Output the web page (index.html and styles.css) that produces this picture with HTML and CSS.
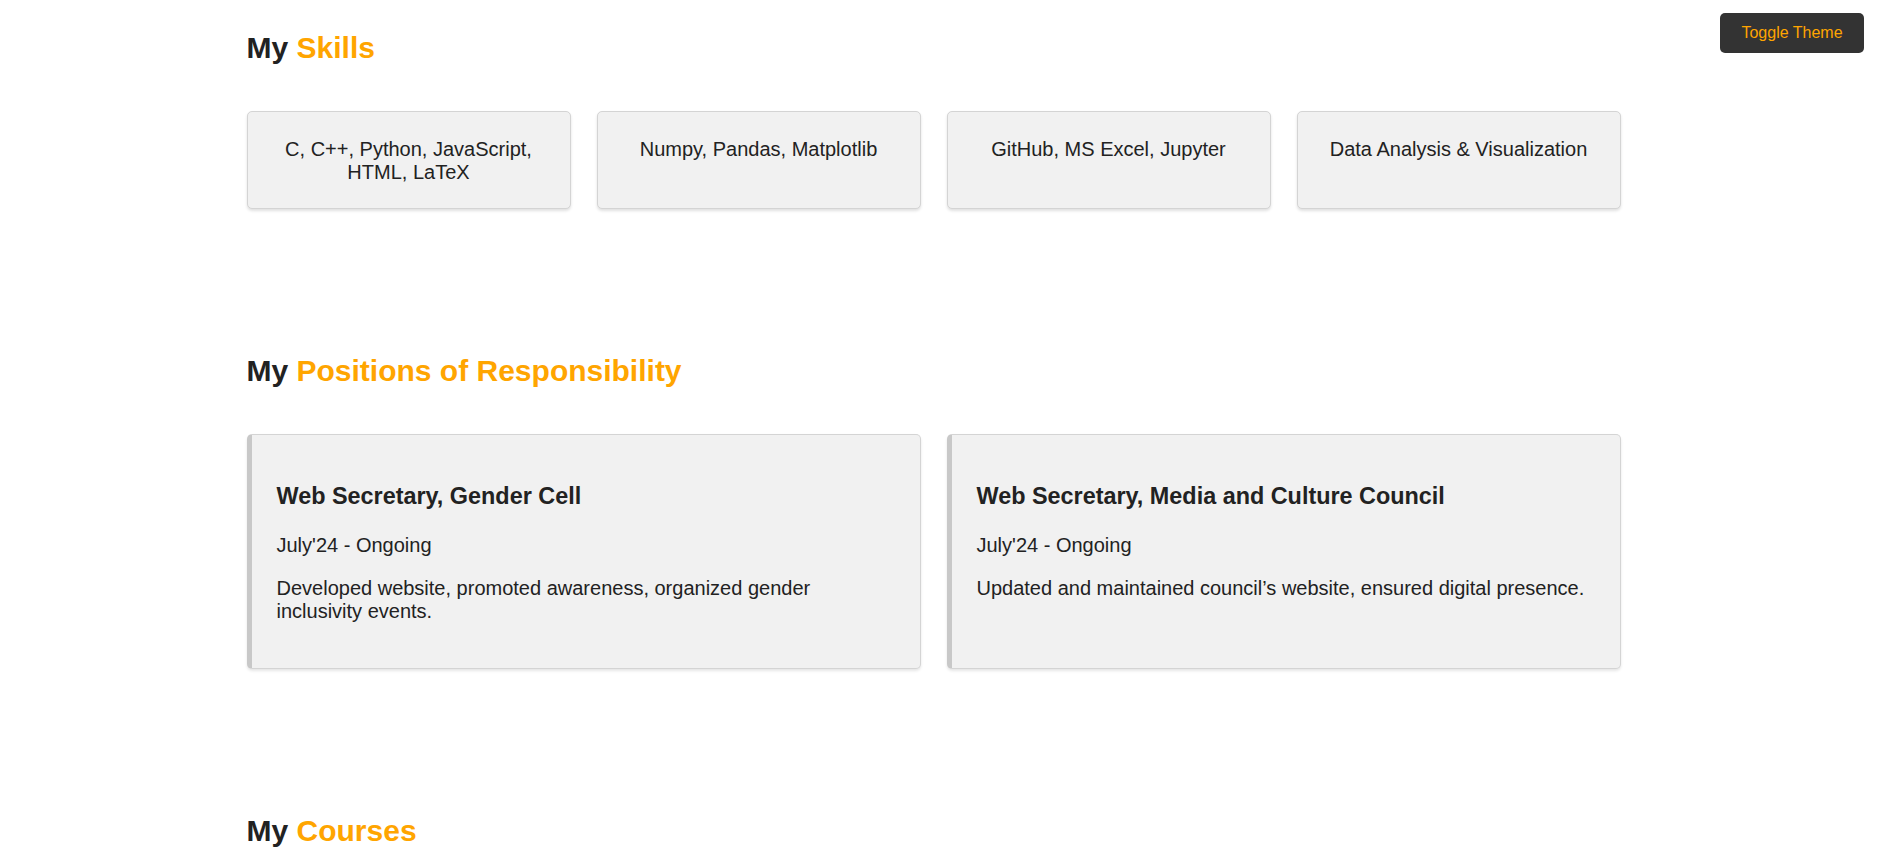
FILE: index.html
```html
<!DOCTYPE html>
<html lang="en">
<head>
<meta charset="utf-8">
<title>Portfolio</title>
<link rel="stylesheet" href="styles.css">
</head>
<body>
<button class="theme-toggle">Toggle Theme</button>
<main class="page">
  <section class="section">
    <h2 class="section-title section-title--first">My <span class="accent">Skills</span></h2>
    <div class="skills-grid">
      <div class="skill-card">C, C++, Python, JavaScript, HTML, LaTeX</div>
      <div class="skill-card">Numpy, Pandas, Matplotlib</div>
      <div class="skill-card">GitHub, MS Excel, Jupyter</div>
      <div class="skill-card">Data Analysis &amp; Visualization</div>
    </div>
  </section>

  <section class="section">
    <h2 class="section-title">My <span class="accent">Positions of Responsibility</span></h2>
    <div class="positions-grid">
      <div class="position-card">
        <h3 class="position-title">Web Secretary, Gender Cell</h3>
        <p class="position-text">July'24 - Ongoing</p>
        <p class="position-text">Developed website, promoted awareness, organized gender inclusivity events.</p>
      </div>
      <div class="position-card">
        <h3 class="position-title">Web Secretary, Media and Culture Council</h3>
        <p class="position-text">July'24 - Ongoing</p>
        <p class="position-text">Updated and maintained council’s website, ensured digital presence.</p>
      </div>
    </div>
  </section>

  <section class="section">
    <h2 class="section-title">My <span class="accent">Courses</span></h2>
  </section>
</main>
</body>
</html>
```

FILE: styles.css
```css
html, body {
  margin: 0;
  padding: 0;
  background: #ffffff;
}

body {
  font-family: "Liberation Sans", Arial, sans-serif;
  font-size: 20px;
  color: #222222;
  padding-right: 15px;
}

.page {
  width: 1374px;
  margin: 0 auto;
}

.theme-toggle {
  position: fixed;
  top: 13px;
  right: 18px;
  width: 144px;
  height: 40px;
  padding: 0;
  border: none;
  border-radius: 5px;
  background: #333333;
  color: #ffa500;
  font-family: "Liberation Sans", Arial, sans-serif;
  font-size: 16px;
  cursor: pointer;
}

.section {
  padding: 31px 0 114px;
}

.section-title {
  margin: 0 0 46.5px;
  font-size: 30px;
  font-weight: bold;
  color: #222222;
}

.section-title--first {
  margin-bottom: 45.5px;
}

.accent {
  color: #ffa500;
}

.skills-grid {
  display: grid;
  grid-template-columns: repeat(4, 1fr);
  gap: 26px;
}

.skill-card {
  background: #f1f1f1;
  border: 1px solid #d4d4d4;
  border-radius: 5px;
  box-shadow: 0 2px 3px rgba(0, 0, 0, 0.12);
  padding: 26px 20px 24px;
  text-align: center;
}

.positions-grid {
  display: grid;
  grid-template-columns: repeat(2, 1fr);
  gap: 26px;
}

.position-card {
  background: #f1f1f1;
  border: 1px solid #d4d4d4;
  border-left: 5px solid #c8c8c8;
  border-radius: 5px;
  box-shadow: 0 2px 3px rgba(0, 0, 0, 0.1);
  padding: 25px;
}

.position-title {
  font-size: 1.17em;
  font-weight: bold;
  margin: 1em 0;
}

.position-text {
  margin: 20px 0;
}
```
